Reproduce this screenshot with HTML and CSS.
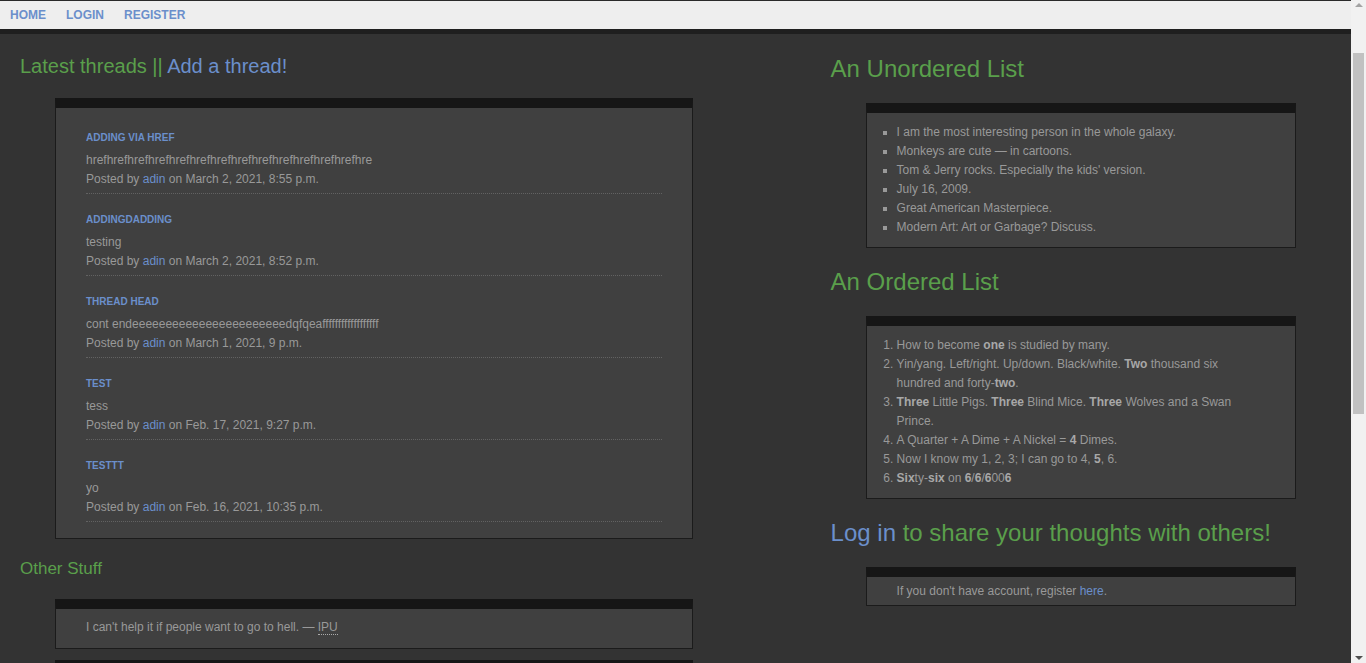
FILE: index.html
```html
<!DOCTYPE html>
<html lang="en">
<head>
<meta charset="utf-8">
<title>Forum</title>
<link rel="stylesheet" href="styles.css">
</head>
<body>
<div class="page">
  <nav class="topnav">
    <a href="#" class="topnav-link">Home</a>
    <a href="#" class="topnav-link">Login</a>
    <a href="#" class="topnav-link">Register</a>
  </nav>
  <div class="layout">
    <main class="col col-main">
      <h2 class="heading heading-first">Latest threads || <a href="#" class="link">Add a thread!</a></h2>
      <div class="box box-wide box-threads">
        <article class="thread">
          <h3 class="thread-title"><a href="#" class="link">Adding via href</a></h3>
          <p class="thread-text">hrefhrefhrefhrefhrefhrefhrefhrefhrefhrefhrefhrefhrefhre</p>
          <p class="thread-text">Posted by <a href="#" class="link">adin</a> on March 2, 2021, 8:55 p.m.</p>
        </article>
        <article class="thread">
          <h3 class="thread-title"><a href="#" class="link">addingdadding</a></h3>
          <p class="thread-text">testing</p>
          <p class="thread-text">Posted by <a href="#" class="link">adin</a> on March 2, 2021, 8:52 p.m.</p>
        </article>
        <article class="thread">
          <h3 class="thread-title"><a href="#" class="link">thread head</a></h3>
          <p class="thread-text">cont endeeeeeeeeeeeeeeeeeeeeeeedqfqeaffffffffffffffffff</p>
          <p class="thread-text">Posted by <a href="#" class="link">adin</a> on March 1, 2021, 9 p.m.</p>
        </article>
        <article class="thread">
          <h3 class="thread-title"><a href="#" class="link">test</a></h3>
          <p class="thread-text">tess</p>
          <p class="thread-text">Posted by <a href="#" class="link">adin</a> on Feb. 17, 2021, 9:27 p.m.</p>
        </article>
        <article class="thread">
          <h3 class="thread-title"><a href="#" class="link">testtt</a></h3>
          <p class="thread-text">yo</p>
          <p class="thread-text">Posted by <a href="#" class="link">adin</a> on Feb. 16, 2021, 10:35 p.m.</p>
        </article>
      </div>

      <h2 class="heading heading-small">Other Stuff</h2>
      <div class="box box-wide box-quote">
        <p class="quote">I can't help it if people want to go to hell. — <abbr title="IPU">IPU</abbr></p>
      </div>
      <div class="box box-wide box-quote">
        <p class="quote">Many a true word is spoken in jest. — <abbr title="Anonymous">Anon</abbr></p>
      </div>
      <div class="box box-wide box-quote">
        <p class="quote">Simplicity is the ultimate sophistication.</p>
      </div>
      <div class="box box-wide box-quote">
        <p class="quote">The only way to do great work is to love what you do.</p>
      </div>
      <div class="box box-wide box-quote">
        <p class="quote">Stay hungry, stay foolish.</p>
      </div>
      <div class="box box-wide box-quote">
        <p class="quote">Talk is cheap. Show me the code.</p>
      </div>
      <div class="box box-wide box-quote">
        <p class="quote">Premature optimization is the root of all evil.</p>
      </div>
      <div class="box box-wide box-quote">
        <p class="quote">Make it work, make it right, make it fast.</p>
      </div>
    </main>

    <aside class="col col-side">
      <h2 class="heading heading-large heading-first">An Unordered List</h2>
      <div class="box box-side box-list">
        <ul class="list list-square">
          <li>I am the most interesting person in the whole galaxy.</li>
          <li>Monkeys are cute — in cartoons.</li>
          <li>Tom &amp; Jerry rocks. Especially the kids' version.</li>
          <li>July 16, 2009.</li>
          <li>Great American Masterpiece.</li>
          <li>Modern Art: Art or Garbage? Discuss.</li>
        </ul>
      </div>

      <h2 class="heading heading-large">An Ordered List</h2>
      <div class="box box-side box-list">
        <ol class="list">
          <li>How to become <strong>one</strong> is studied by many.</li>
          <li>Yin/yang. Left/right. Up/down. Black/white. <strong>Two</strong> thousand six hundred and forty-<strong>two</strong>.</li>
          <li><strong>Three</strong> Little Pigs. <strong>Three</strong> Blind Mice. <strong>Three</strong> Wolves and a Swan Prince.</li>
          <li>A Quarter + A Dime + A Nickel = <strong>4</strong> Dimes.</li>
          <li>Now I know my 1, 2, 3; I can go to 4, <strong>5</strong>, 6.</li>
          <li><strong>Six</strong>ty-<strong>six</strong> on <strong>6</strong>/<strong>6</strong>/<strong>6</strong>00<strong>6</strong></li>
        </ol>
      </div>

      <h2 class="heading heading-large"><a href="#" class="link">Log in</a> to share your thoughts with others!</h2>
      <div class="box box-side box-note">
        <p class="note">If you don't have account, register <a href="#" class="link">here</a>.</p>
      </div>
    </aside>
  </div>
</div>
<div class="scrollbar" aria-hidden="true">
  <span class="scrollbar-arrow scrollbar-arrow-up"></span>
  <span class="scrollbar-thumb"></span>
  <span class="scrollbar-arrow scrollbar-arrow-down"></span>
</div>
</body>
</html>
```

FILE: styles.css
```css
html, body {
  margin: 0;
  padding: 0;
}

body {
  background: #333333;
  color: #999999;
  font-family: "Liberation Sans", Arial, sans-serif;
  font-size: 12px;
  line-height: 19px;
}

.page {
  margin-right: 15px;
}

.link {
  color: #6b8fcb;
  text-decoration: none;
}

.topnav {
  display: flex;
  height: 28px;
  align-items: center;
  background: #eeeeee;
  border-top: 1px solid #2a2a2a;
  border-bottom: 5px solid #1f1f1f;
}

.topnav-link {
  padding: 0 10px;
  color: #6b8fcb;
  font-weight: bold;
  font-size: 12px;
  text-transform: uppercase;
  text-decoration: none;
}

.layout {
  display: flex;
  align-items: flex-start;
}

.col {
  box-sizing: border-box;
  padding: 21px 20px 40px;
}

.col-main {
  flex: 0 0 60%;
}

.col-side {
  flex: 0 0 40%;
}

.heading {
  margin: 20px 0 20px;
  font-weight: normal;
  font-size: 20px;
  line-height: 23px;
  color: #5a9f4b;
}

.heading-first {
  margin-top: 0;
}

.heading-small {
  font-size: 17px;
  line-height: 20px;
}

.heading-large {
  font-size: 24px;
  line-height: 28px;
  margin-top: 20px;
}

.heading-large.heading-first {
  margin-top: 0;
}

.box {
  background: #404040;
  border: 1px solid #1b1b1b;
  border-top: 10px solid #161616;
  padding: 0 30px;
}

.box-wide {
  width: 638px;
  box-sizing: border-box;
  margin-left: 35px;
}

.box-side {
  margin: 0 35px;
  padding-right: 32px;
}

.box-threads {
  padding-top: 23px;
  padding-bottom: 16px;
}

.thread {
  padding-bottom: 4px;
  margin-bottom: 19px;
  border-bottom: 1px dotted #626262;
}

.thread:last-child {
  margin-bottom: 0;
}

.thread-title {
  margin: 0 0 6px;
  font-size: 10px;
  line-height: 14px;
  font-weight: bold;
  text-transform: uppercase;
}

.thread-text {
  margin: 0;
}

.box-quote {
  padding-top: 9px;
  padding-bottom: 11px;
  margin-bottom: 11px;
}

.quote {
  margin: 0;
}

abbr {
  text-decoration: none;
  border-bottom: 1px dotted #aaaaaa;
}

.box-list {
  padding-top: 10px;
  padding-bottom: 10px;
}

.list {
  margin: 0;
  padding: 0;
}

.list-square {
  list-style: square;
}

.list strong {
  color: #a8a8a8;
}

.box-note {
  padding-top: 5px;
  padding-bottom: 4px;
}

.note {
  margin: 0;
}

.scrollbar {
  position: fixed;
  top: 0;
  right: 0;
  width: 15px;
  height: 100%;
  background: #f1f1f1;
}

.scrollbar-thumb {
  position: absolute;
  left: 2px;
  right: 2px;
  top: 53px;
  height: 361px;
  background: #c1c1c1;
}

.scrollbar-arrow {
  position: absolute;
  left: 4px;
  width: 0;
  height: 0;
  border-left: 4px solid transparent;
  border-right: 4px solid transparent;
}

.scrollbar-arrow-up {
  top: 3px;
  border-bottom: 4px solid #a3a3a3;
}

.scrollbar-arrow-down {
  bottom: 3px;
  border-top: 4px solid #505050;
}
```
